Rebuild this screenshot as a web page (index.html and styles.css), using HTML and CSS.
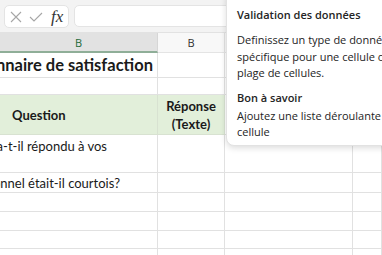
FILE: index.html
```html
<!DOCTYPE html>
<html lang="fr">
<head>
<meta charset="utf-8">
<link rel="stylesheet" href="styles.css">
</head>
<body>
<div class="topbar">
  <div class="fbox">
    <svg class="ico" width="12" height="12" viewBox="0 0 12 12"><path d="M1 1L11 11M11 1L1 11" stroke="#a6a6a6" stroke-width="1.1" fill="none"/></svg>
    <svg class="ico" width="14" height="12" viewBox="0 0 14 12"><path d="M1 6L5 10L13 2" stroke="#a6a6a6" stroke-width="1.1" fill="none"/></svg>
    <span class="fx">fx</span>
  </div>
  <div class="finput"></div>
</div>
<div class="sheet">
  <div class="cell hdr sel">B</div>
  <div class="cell hdr">B</div>
  <div class="cell hdr"></div>
  <div class="cell hdr"></div>

  <div class="cell title"><span>Questionnaire de satisfaction</span></div>
  <div class="cell"></div>
  <div class="cell"></div>
  <div class="cell"></div>

  <div class="cell"></div>
  <div class="cell"></div>
  <div class="cell"></div>
  <div class="cell"></div>

  <div class="cell green q">Question</div>
  <div class="cell green r">Réponse<br>(Texte)</div>
  <div class="cell"></div>
  <div class="cell"></div>

  <div class="cell txt top p1"><span>Le service a-t-il répondu à vos</span></div>
  <div class="cell"></div>
  <div class="cell"></div>
  <div class="cell"></div>

  <div class="cell txt p2"><span>Le personnel était-il courtois?</span></div>
  <div class="cell"></div>
  <div class="cell"></div>
  <div class="cell"></div>

  <div class="cell"></div><div class="cell"></div><div class="cell"></div><div class="cell"></div>
  <div class="cell"></div><div class="cell"></div><div class="cell"></div><div class="cell"></div>
  <div class="cell"></div><div class="cell"></div><div class="cell"></div><div class="cell"></div>
  <div class="cell"></div><div class="cell"></div><div class="cell"></div><div class="cell"></div>
</div>
<div class="tip">
  <div class="tip-title">Validation des données</div>
  <p class="tip-text">Definissez un type de données<br>spécifique pour une cellule ou une<br>plage de cellules.</p>
  <div class="tip-sub">Bon à savoir</div>
  <p class="tip-text tight">Ajoutez une liste déroulante à une<br>cellule</p>
</div>
</body>
</html>
```
FILE: styles.css
```css
html, body {
  margin: 0;
  padding: 0;
}
body {
  width: 382px;
  height: 255px;
  overflow: hidden;
  position: relative;
  background: #ffffff;
  font-family: "Lato", "Open Sans", sans-serif;
  color: #1a1a1a;
}
.topbar {
  box-sizing: border-box;
  height: 33px;
  padding: 5px 0 5px 4px;
  display: flex;
  gap: 5px;
  background: #f3f3f3;
  border-bottom: 1px solid #e2e2e2;
}
.fbox {
  box-sizing: border-box;
  width: 65px;
  height: 23px;
  background: #fff;
  border: 1px solid #e4e4e4;
  border-radius: 5px;
  display: flex;
  align-items: center;
  padding-left: 5px;
  gap: 7px;
}
.fx {
  font-family: "Liberation Serif", serif;
  font-style: italic;
  font-size: 17px;
  color: #333;
  margin-left: 1px;
  line-height: 1;
}
.finput {
  flex: 1;
  background: #fff;
  border: 1px solid #e4e4e4;
  border-radius: 5px;
}
.sheet {
  display: grid;
  grid-template-columns: 158px 67px 128px 1fr;
  grid-template-rows: 20px 25px 17px 40px 38px 20px 19px 19px 18px 19px;
}
.cell {
  box-sizing: border-box;
  border-right: 1px solid #e1e1e1;
  border-bottom: 1px solid #e1e1e1;
  overflow: hidden;
  white-space: nowrap;
}
.hdr {
  background: #f8f8f8;
  font-family: "Open Sans", sans-serif;
  font-size: 11px;
  color: #333;
  display: flex;
  align-items: center;
  justify-content: center;
  border-bottom: 1px solid #e4e4e4;
}
.hdr.sel {
  background: #e2e2e2;
  color: #1e6b3a;
  border-bottom: 2px solid #8fae98;
  border-right-color: #d6d6d6;
}
.title {
  display: flex;
  justify-content: flex-end;
  align-items: center;
  padding-right: 4px;
  font-weight: 700;
  font-size: 16.5px;
}
.green {
  background: #e2efda;
  border-color: #d8e2d1;
  font-weight: 700;
  font-size: 13px;
  display: flex;
  align-items: center;
}
.q {
  padding-left: 12px;
}
.r {
  justify-content: center;
  text-align: center;
  line-height: 18px;
}
.txt {
  display: flex;
  justify-content: flex-end;
  align-items: center;
  font-size: 13px;
}
.txt.top {
  align-items: flex-start;
  padding-top: 3px;
}
.p1 { padding-right: 50px; }
.p2 { padding-right: 37px; }
.tip {
  position: absolute;
  left: 226px;
  top: -10px;
  width: 175px;
  height: 156px;
  box-sizing: border-box;
  background: #fff;
  border: 1px solid #e2e2e2;
  border-radius: 8px;
  box-shadow: 0 2px 6px rgba(0, 0, 0, 0.14);
  padding: 16px 0 0 10px;
  font-family: "Open Sans", sans-serif;
  color: #242424;
  white-space: nowrap;
}
.tip-title, .tip-sub {
  font-weight: 600;
  font-size: 11px;
  line-height: 16px;
}
.tip-sub {
  margin-top: 8px;
}
.tip-text {
  margin: 9px 0 0 0;
  font-size: 11px;
  line-height: 16.5px;
}
.tip-text.tight {
  margin-top: 2px;
  line-height: 16px;
}
```
